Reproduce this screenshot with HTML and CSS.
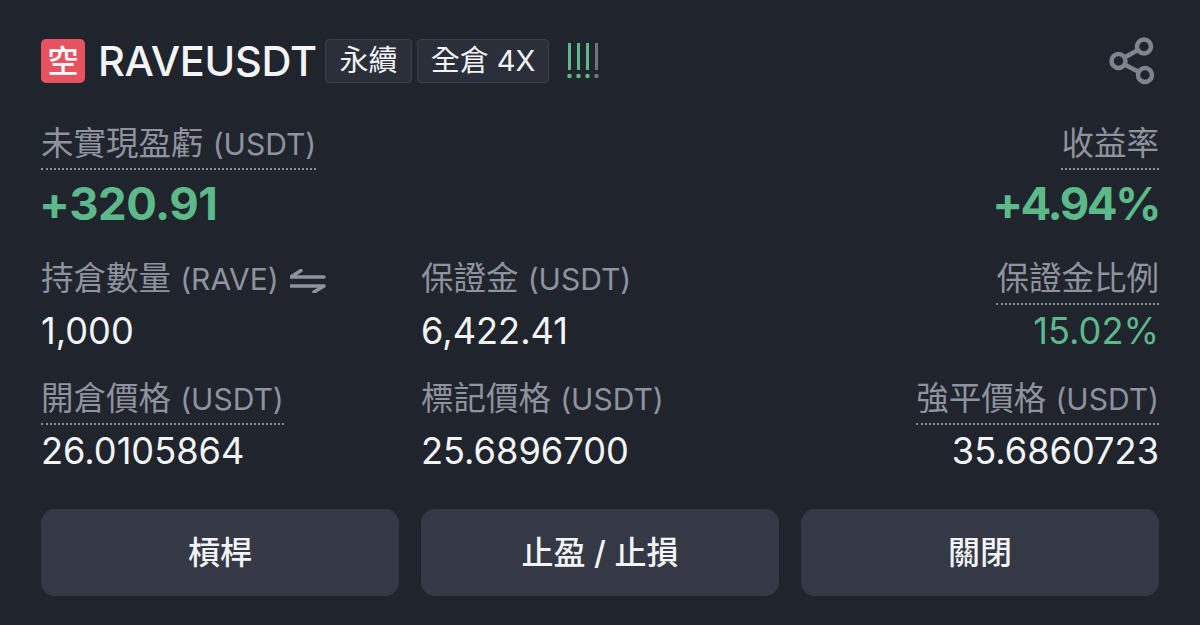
FILE: index.html
```html
<!DOCTYPE html>
<html lang="zh-Hant">
<head>
<meta charset="utf-8">
<title>RAVEUSDT</title>
<link rel="stylesheet" href="styles.css">
</head>
<body>
<main class="card">
  <header class="head">
    <span class="side">空</span>
    <h1 class="symbol">RAVEUSDT</h1>
    <span class="tag tag-first">永續</span>
    <span class="tag tag-second">全倉 4X</span>
    <svg class="signal" width="34" height="36" viewBox="0 0 34 36" aria-hidden="true">
      <g class="bar-on">
        <rect x="2" y="0" width="3" height="27"/><circle cx="3.5" cy="33" r="2.3"/>
        <rect x="11" y="0" width="3" height="27"/><circle cx="12.5" cy="33" r="2.3"/>
        <rect x="20" y="0" width="3" height="27"/><circle cx="21.5" cy="33" r="2.3"/>
      </g>
      <g class="bar-off">
        <rect x="29" y="0" width="3" height="27"/><circle cx="30.5" cy="33" r="2.3"/>
      </g>
    </svg>
    <svg class="share" width="48" height="48" viewBox="0 0 48 48" aria-hidden="true">
      <circle cx="35" cy="9.5" r="7"/>
      <circle cx="9.5" cy="24" r="7"/>
      <circle cx="36" cy="38" r="7"/>
      <path d="M15.5 20.5 29 13M15.5 27.5 30 35"/>
    </svg>
  </header>

  <section class="pnl">
    <div class="cell">
      <span class="label dotted">未實現盈虧 <small>(USDT)</small></span>
      <strong class="big gain up">+320.91</strong>
    </div>
    <div class="cell right">
      <span class="label dotted">收益率</span>
      <strong class="big pct up">+4.94%</strong>
    </div>
  </section>

  <section class="stats">
    <div class="cell">
      <span class="label">持倉數量 <small>(RAVE)</small>
        <svg class="swap" width="36" height="24" viewBox="0 0 36 24" aria-hidden="true">
          <path d="M1 8H34M1 8 11 1.5M1 17H34M34 17 24 23"/>
        </svg>
      </span>
      <span class="value">1,000</span>
    </div>
    <div class="cell">
      <span class="label">保證金 <small>(USDT)</small></span>
      <span class="value">6,422.41</span>
    </div>
    <div class="cell right">
      <span class="label dotted">保證金比例</span>
      <span class="value up">15.02%</span>
    </div>
    <div class="cell">
      <span class="label dotted">開倉價格 <small>(USDT)</small></span>
      <span class="value">26.0105864</span>
    </div>
    <div class="cell">
      <span class="label">標記價格 <small>(USDT)</small></span>
      <span class="value">25.6896700</span>
    </div>
    <div class="cell right">
      <span class="label dotted">強平價格 <small>(USDT)</small></span>
      <span class="value">35.6860723</span>
    </div>
  </section>

  <footer class="actions">
    <button class="btn" type="button">槓桿</button>
    <button class="btn" type="button">止盈 / 止損</button>
    <button class="btn" type="button">關閉</button>
  </footer>
</main>
</body>
</html>
```

FILE: styles.css
```css
* {
  box-sizing: border-box;
}

html,
body {
  margin: 0;
  height: 100%;
  background: #20242d;
  overflow: hidden;
}

body {
  font-family: "Inter", "Noto Sans CJK TC", sans-serif;
  color: #f2f4f6;
}

.card {
  width: 1200px;
  height: 625px;
  padding: 39px 41px 0;
  display: flex;
  flex-direction: column;
}

.head {
  display: flex;
  align-items: center;
  height: 44px;
}

.side {
  width: 44px;
  height: 44px;
  border-radius: 5px;
  background: #e6525f;
  color: #fff;
  font-size: 31px;
  font-weight: 500;
  line-height: 44px;
  text-align: center;
}

.symbol {
  width: 227px;
  margin: 0 0 0 13px;
  font-size: 41.5px;
  font-weight: 500;
  letter-spacing: -0.3px;
  line-height: 44px;
  white-space: nowrap;
}

.tag {
  height: 44px;
  border: 1px solid #3a404c;
  border-radius: 4px;
  background: #2a2f3a;
  font-size: 29px;
  line-height: 42px;
  text-align: center;
  white-space: nowrap;
}

.tag-first {
  width: 87px;
}

.tag-second {
  width: 132px;
  margin-left: 5px;
}

.signal {
  margin-left: 17px;
}

.bar-on {
  fill: #5cb98a;
}

.bar-off {
  fill: #6f7480;
}

.share {
  margin-left: auto;
  margin-right: 2px;
  fill: none;
  stroke: #7f8490;
  stroke-width: 4.5;
}

.cell {
  display: flex;
  flex-direction: column;
  align-items: flex-start;
}

.cell.right {
  align-items: flex-end;
}

.label {
  padding-bottom: 4px;
  border-bottom: 2px solid transparent;
  color: #8e939e;
  font-size: 32.5px;
  line-height: 40px;
  white-space: nowrap;
}

.label small {
  font-size: 30px;
}

.dotted {
  border-bottom: 2px dotted #8a8f9a;
}

.swap {
  vertical-align: -3px;
  margin-left: 2px;
  fill: none;
  stroke: #8e939e;
  stroke-width: 3.5;
  stroke-linecap: round;
}

.up {
  color: #5cb98a;
}

.pnl {
  display: flex;
  justify-content: space-between;
  margin-top: 41px;
}

.big {
  margin-top: 9px;
  font-size: 45.5px;
  font-weight: 700;
  letter-spacing: -0.5px;
  line-height: 50px;
}

.big.gain {
  margin-left: -2px;
}

.big.pct {
  letter-spacing: -2.4px;
}

.stats {
  display: grid;
  grid-template-columns: 380px 380px 1fr;
  row-gap: 28px;
  margin-top: 30px;
}

.value {
  margin-top: 6px;
  font-size: 36.2px;
  line-height: 40px;
}

.actions {
  display: grid;
  grid-template-columns: repeat(3, 358px);
  column-gap: 22px;
  margin-top: auto;
  margin-bottom: 29px;
}

.btn {
  height: 87px;
  padding: 0 0 5px;
  border: 0;
  border-radius: 14px;
  background: #343945;
  color: #f2f4f6;
  font-family: inherit;
  font-size: 32px;
  font-weight: 500;
}
```
